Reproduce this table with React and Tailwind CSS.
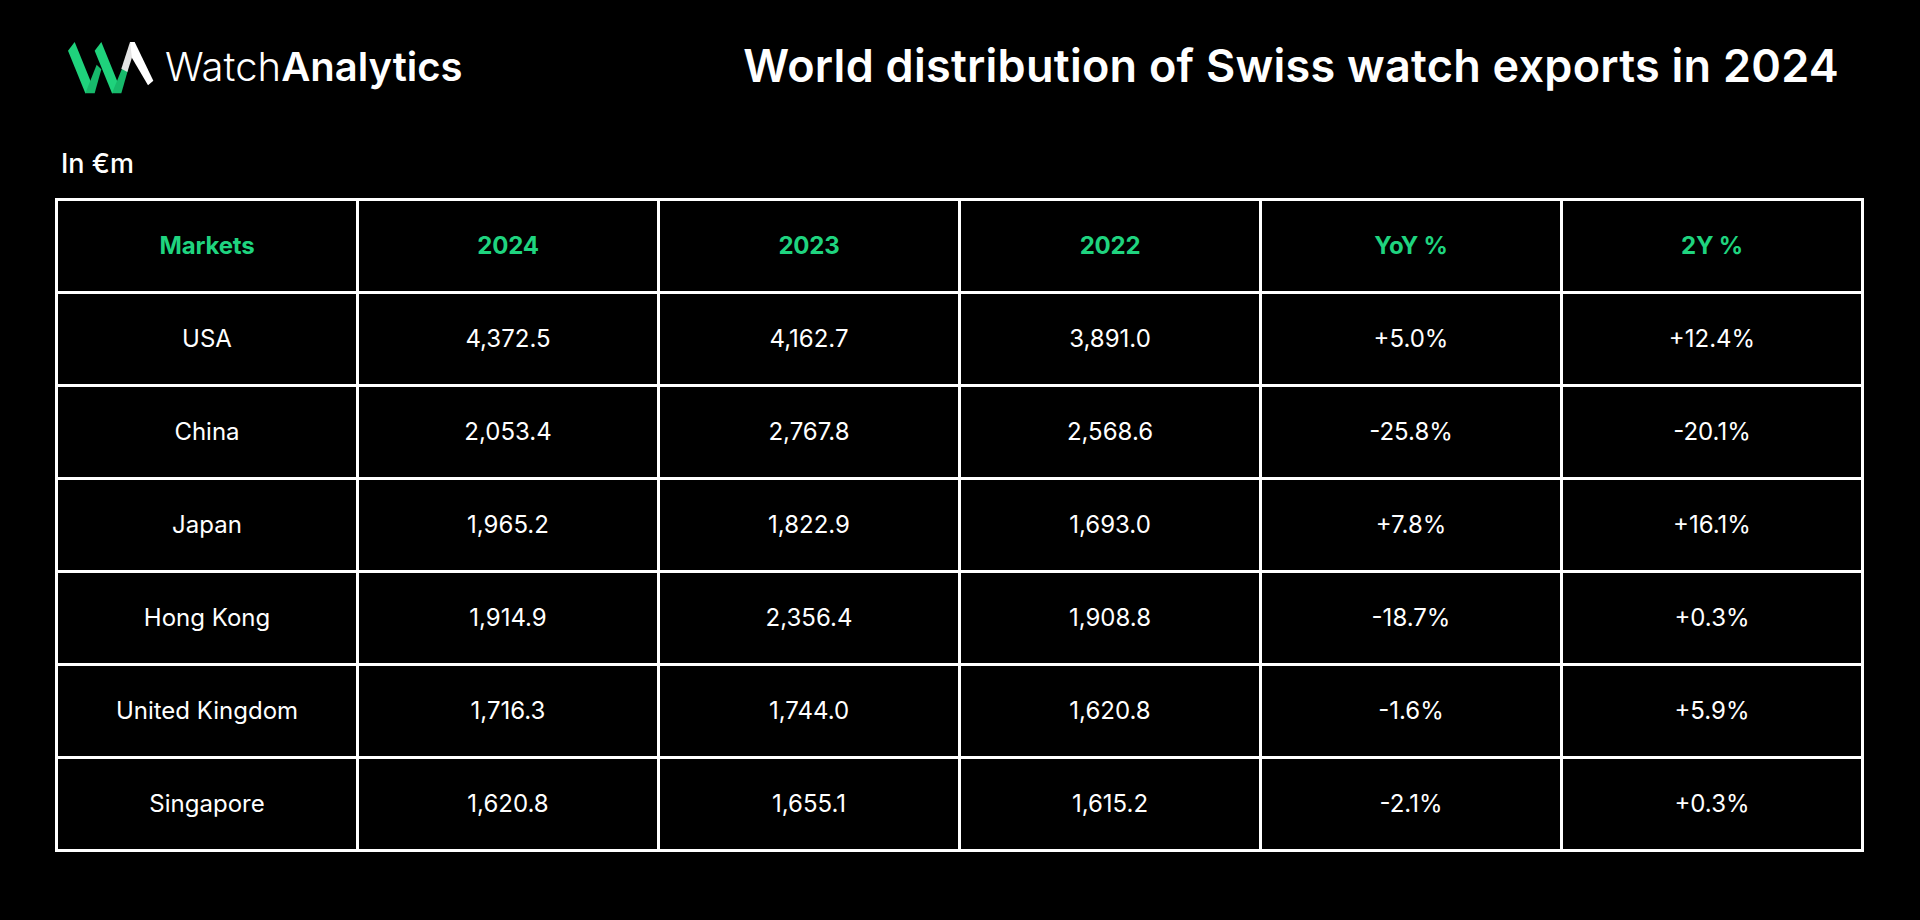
const rows = [
  ['USA', '4,372.5', '4,162.7', '3,891.0', '+5.0%', '+12.4%'],
  ['China', '2,053.4', '2,767.8', '2,568.6', '-25.8%', '-20.1%'],
  ['Japan', '1,965.2', '1,822.9', '1,693.0', '+7.8%', '+16.1%'],
  ['Hong Kong', '1,914.9', '2,356.4', '1,908.8', '-18.7%', '+0.3%'],
  ['United Kingdom', '1,716.3', '1,744.0', '1,620.8', '-1.6%', '+5.9%'],
  ['Singapore', '1,620.8', '1,655.1', '1,615.2', '-2.1%', '+0.3%'],
];

const headers = ['Markets', '2024', '2023', '2022', 'YoY %', '2Y %'];

function Logo() {
  return (
    <svg width="96" height="60" viewBox="0 0 288 180" className="shrink-0">
      <polygon points="18,38 38,12 98,160 70,166" fill="#1fd27c" />
      <polygon points="70,166 98,166 118,94 104,80" fill="#17b96b" />
      <polygon points="98,38 118,12 178,160 150,166" fill="#1fd27c" />
      <polygon points="150,166 178,166 198,96 184,82" fill="#17b96b" />
      <polygon points="178,92 204,12 216,40 196,102" fill="#e4e4e4" />
      <polygon points="204,12 218,12 274,128 258,142 210,60" fill="#ffffff" />
    </svg>
  );
}

export default function App() {
  return (
    <div
      className="w-[1920px] h-[920px] bg-black text-white overflow-hidden"
      style={{ fontFamily: 'Inter, "Noto Sans", sans-serif' }}
    >
      <div className="flex items-start justify-between pt-[38px] pl-[62px] pr-[81px]">
        <div className="flex items-center gap-[7px]">
          <Logo />
          <div className="text-[40px] leading-[48px] -mt-[3px]">
            <span className="font-light">Watch</span>
            <span className="font-semibold">Analytics</span>
          </div>
        </div>
        <h1 className="text-[45px] leading-[52px] font-semibold tracking-[0.25px] mt-[2px]">
          World distribution of Swiss watch exports in 2024
        </h1>
      </div>

      <p className="ml-[61px] mt-[50px] text-[27px] leading-[32px] font-medium">In €m</p>

      <table className="ml-[55px] mt-[18px] w-[1809px] table-fixed border-collapse border-[3px] border-white">
        <thead>
          <tr className="h-[93px]">
            {headers.map((h) => (
              <th
                key={h}
                className="border-[3px] border-white text-center align-middle text-[24px] font-bold tracking-[-0.2px] text-[#1fd47f]"
              >
                {h}
              </th>
            ))}
          </tr>
        </thead>
        <tbody>
          {rows.map((row) => (
            <tr key={row[0]} className="h-[93px]">
              {row.map((cell, i) => (
                <td
                  key={i}
                  className="border-[3px] border-white text-center align-middle text-[24px] font-normal"
                >
                  {cell}
                </td>
              ))}
            </tr>
          ))}
        </tbody>
      </table>
    </div>
  );
}
